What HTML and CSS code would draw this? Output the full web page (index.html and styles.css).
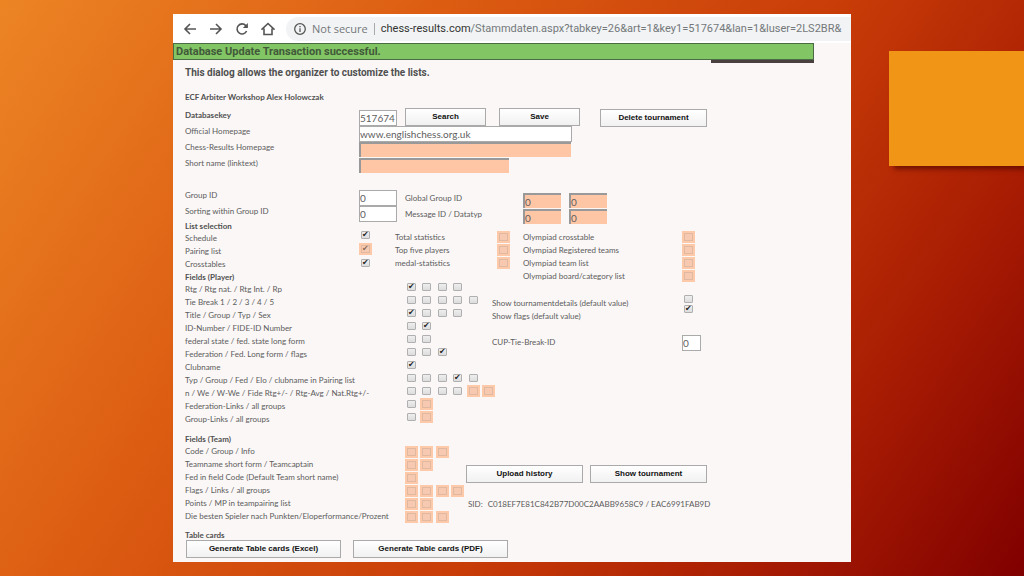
FILE: index.html
```html
<!DOCTYPE html>
<html lang="en">
<head>
<meta charset="utf-8">
<title>Tournament settings</title>
<link rel="stylesheet" href="styles.css">
</head>
<body>
<div class="slide">
<main class="window">
  <header class="toolbar">
    <button class="nav" aria-label="Back"><svg viewBox="0 0 14 14"><path d="M13 7H2M7 2L2 7l5 5"/></svg></button>
    <button class="nav" aria-label="Forward"><svg viewBox="0 0 14 14"><path d="M1 7h11M7 2l5 5-5 5"/></svg></button>
    <button class="nav" aria-label="Reload"><svg viewBox="0 0 14 14"><path d="M11.6 9A5 5 0 1 1 10.8 3.6L12 4.8"/><path class="solid" d="M12.9 1v5H7.9z"/></svg></button>
    <button class="nav" aria-label="Home"><svg viewBox="0 0 14 14"><path d="M.5 7.7L7 1.5l6.5 6.2M3 6.5v6h8v-6"/></svg></button>
    <div class="address">
      <svg class="info" viewBox="0 0 14 14"><circle cx="7" cy="7" r="5.3"/><path d="M7 6.3v3.6M7 3.9v1.3"/></svg>
      <span>Not secure</span><span class="divider"></span>
      <span class="url"><b>chess-results.com</b>/Stammdaten.aspx?tabkey=26&amp;art=1&amp;key1=517674&amp;lan=1&amp;luser=2LS2BR&amp;</span>
    </div>
  </header>
  <p class="alert">Database Update Transaction successful.</p>
  <form class="form">
    <h1>This dialog allows the organizer to customize the lists.</h1>
    <h2 class="event">ECF Arbiter Workshop Alex Holowczak</h2>

    <section class="basics">
      <div class="line first">
        <label class="name strong" for="key">Databasekey</label>
        <input class="text short" id="key" value="517674">
        <button type="button" class="btn search">Search</button>
        <button type="button" class="btn save">Save</button>
        <button type="button" class="btn delete">Delete tournament</button>
      </div>
      <div class="line"><label class="name" for="home">Official Homepage</label><input class="text long" id="home" value="www.englishchess.org.uk"></div>
      <div class="line"><label class="name" for="crhome">Chess-Results Homepage</label><input class="text long locked" id="crhome"></div>
      <div class="line"><label class="name" for="sname">Short name (linktext)</label><input class="text medium locked" id="sname"></div>
    </section>

    <section class="groups">
      <div class="stack names wide"><label for="gid">Group ID</label><label for="sort">Sorting within Group ID</label></div>
      <div class="stack"><input class="text short" id="gid" value="0"><input class="text short" id="sort" value="0"></div>
      <div class="stack names ids"><label for="ggid">Global Group ID</label><label for="msg">Message ID / Datatyp</label></div>
      <div class="pairs">
        <input class="text short locked" id="ggid" value="0"><input class="text short locked" aria-label="Global Group ID 2" value="0">
        <input class="text short locked" id="msg" value="0"><input class="text short locked" aria-label="Datatyp" value="0">
      </div>
    </section>

    <section class="lists">
      <div class="rows wide">
        <h2>List selection</h2>
        <label for="l1">Schedule</label><label for="l2">Pairing list</label><label for="l3">Crosstables</label>
        <h2 class="player">Fields (Player)</h2>
        <label for="p1">Rtg / Rtg nat. / Rtg Int. / Rp</label>
        <label for="p2">Tie Break 1 / 2 / 3 / 4 / 5</label>
        <label for="p3">Title / Group / Typ / Sex</label>
        <label for="p4">ID-Number / FIDE-ID Number</label>
        <label for="p5">federal state / fed. state long form</label>
        <label for="p6">Federation / Fed. Long form / flags</label>
        <label for="p7">Clubname</label>
        <label for="p8">Typ / Group / Fed / Elo / clubname in Pairing list</label>
        <label for="p9">n / We / W-We / Fide Rtg+/- / Rtg-Avg / Nat.Rtg+/-</label>
        <label for="p10">Federation-Links / all groups</label>
        <label for="p11">Group-Links / all groups</label>
      </div>
      <div class="options">
        <div class="selection">
          <div class="checks main"><input type="checkbox" id="l1" checked><input type="checkbox" id="l2" class="off" checked><input type="checkbox" id="l3" checked></div>
          <div class="rows stats"><label for="s1">Total statistics</label><label for="s2">Top five players</label><label for="s3">medal-statistics</label></div>
          <div class="checks mid"><input type="checkbox" id="s1" class="off"><input type="checkbox" id="s2" class="off"><input type="checkbox" id="s3" class="off"></div>
          <div class="rows olympiad"><label for="o1">Olympiad crosstable</label><label for="o2">Olympiad Registered teams</label><label for="o3">Olympiad team list</label><label for="o4">Olympiad board/category list</label></div>
          <div class="checks last"><input type="checkbox" id="o1" class="off"><input type="checkbox" id="o2" class="off"><input type="checkbox" id="o3" class="off"><input type="checkbox" id="o4" class="off"></div>
        </div>
        <div class="playerfields">
          <div class="matrix">
            <div><input type="checkbox" id="p1" aria-label="Rtg" checked><input type="checkbox" aria-label="Rtg nat."><input type="checkbox" aria-label="Rtg Int."><input type="checkbox" aria-label="Rp"></div>
            <div><input type="checkbox" id="p2" aria-label="Tie Break 1"><input type="checkbox" aria-label="Tie Break 2"><input type="checkbox" aria-label="Tie Break 3"><input type="checkbox" aria-label="Tie Break 4"><input type="checkbox" aria-label="Tie Break 5"></div>
            <div><input type="checkbox" id="p3" aria-label="Title" checked><input type="checkbox" aria-label="Group"><input type="checkbox" aria-label="Typ"><input type="checkbox" aria-label="Sex"></div>
            <div><input type="checkbox" id="p4" aria-label="ID-Number"><input type="checkbox" aria-label="FIDE-ID Number" checked></div>
            <div><input type="checkbox" id="p5" aria-label="federal state"><input type="checkbox" aria-label="fed. state long form"></div>
            <div><input type="checkbox" id="p6" aria-label="Federation"><input type="checkbox" aria-label="Fed. Long form"><input type="checkbox" aria-label="flags" checked></div>
            <div><input type="checkbox" id="p7" aria-label="Clubname" checked></div>
            <div><input type="checkbox" id="p8" aria-label="Typ"><input type="checkbox" aria-label="Group"><input type="checkbox" aria-label="Fed"><input type="checkbox" aria-label="Elo" checked><input type="checkbox" aria-label="clubname in Pairing list"></div>
            <div><input type="checkbox" id="p9" aria-label="n"><input type="checkbox" aria-label="We"><input type="checkbox" aria-label="W-We"><input type="checkbox" aria-label="Fide Rtg+/-"><input type="checkbox" class="off" aria-label="Rtg-Avg"><input type="checkbox" class="off" aria-label="Nat.Rtg+/-"></div>
            <div><input type="checkbox" id="p10" aria-label="Federation-Links"><input type="checkbox" class="off" aria-label="all groups"></div>
            <div><input type="checkbox" id="p11" aria-label="Group-Links"><input type="checkbox" class="off" aria-label="all groups"></div>
          </div>
          <div class="rows defaults">
            <label for="d1">Show tournamentdetails (default value)</label><label for="d2">Show flags (default value)</label>
            <label class="cup" for="cup">CUP-Tie-Break-ID</label>
          </div>
          <div class="values">
            <input type="checkbox" id="d1"><input type="checkbox" id="d2" checked>
            <input class="text tiny" id="cup" value="0">
          </div>
        </div>
      </div>
    </section>

    <section class="team">
      <div class="rows teamnames">
        <h2>Fields (Team)</h2>
        <label for="t1">Code / Group / Info</label>
        <label for="t2">Teamname short form / Teamcaptain</label>
        <label for="t3">Fed in field Code (Default Team short name)</label>
        <label for="t4">Flags / Links / all groups</label>
        <label for="t5">Points / MP in teampairing list</label>
        <label for="t6">Die besten Spieler nach Punkten/Eloperformance/Prozent</label>
      </div>
      <div class="matrix">
        <div><input type="checkbox" class="off" id="t1" aria-label="Code"><input type="checkbox" class="off" aria-label="Group"><input type="checkbox" class="off" aria-label="Info"></div>
        <div><input type="checkbox" class="off" id="t2" aria-label="Teamname short form"><input type="checkbox" class="off" aria-label="Teamcaptain"></div>
        <div><input type="checkbox" class="off" id="t3" aria-label="Fed in field Code"></div>
        <div><input type="checkbox" class="off" id="t4" aria-label="Flags"><input type="checkbox" class="off" aria-label="Links"><input type="checkbox" class="off" aria-label="Links 2"><input type="checkbox" class="off" aria-label="all groups"></div>
        <div><input type="checkbox" class="off" id="t5" aria-label="Points"><input type="checkbox" class="off" aria-label="MP"></div>
        <div><input type="checkbox" class="off" id="t6" aria-label="Punkten"><input type="checkbox" class="off" aria-label="Eloperformance"><input type="checkbox" class="off" aria-label="Prozent"></div>
      </div>
      <div class="actions">
        <div class="pair"><button type="button" class="btn">Upload history</button><button type="button" class="btn">Show tournament</button></div>
        <p class="sid"><span>SID:</span><span>C018EF7E81C842B77D00C2AABB9658C9 / EAC6991FAB9D</span></p>
      </div>
    </section>

    <section class="cards">
      <h2>Table cards</h2>
      <div class="cardbuttons"><button type="button" class="btn">Generate Table cards (Excel)</button><button type="button" class="btn">Generate Table cards (PDF)</button></div>
    </section>
  </form>
</main>
<aside class="side"><div class="block"></div></aside>
</div>
</body>
</html>
```
FILE: styles.css
```css
* { box-sizing: border-box; }
body {
  margin: 0;
  font-family: Lato, "Open Sans", sans-serif;
  font-size: 8px;
  line-height: 10px;
  color: #5c5c5c;
}
h1, h2, p { margin: 0; }
h2 { font-size: 8px; font-weight: 700; color: #505050; white-space: nowrap; }
label { white-space: nowrap; }
.slide {
  min-height: 100vh;
  padding: 14px 0;
  display: grid;
  grid-template-columns: 173fr 678fr 173fr;
  align-items: start;
  background: linear-gradient(124deg, #ec8424 0%, #dc5c12 32%, #c83c08 60%, #a91d03 80%, #800000 100%);
}
.window { grid-column: 2; background: #faf7f6; min-width: 0; }
.side { padding: 37px 0 0 38px; }
.block { height: 115px; background: #f09516; box-shadow: 3px 5px 5px -2px rgba(60, 0, 0, .6); }

/* browser toolbar */
.toolbar { display: flex; align-items: center; gap: 12px; height: 29px; padding-left: 10px; background: #fff; }
.nav { width: 14px; height: 14px; padding: 0; border: 0; background: none; flex: none; }
.toolbar svg { display: block; width: 14px; height: 14px; fill: none; stroke: #555; stroke-width: 1.6; flex: none; }
.toolbar .solid { fill: #555; stroke: none; }
.address {
  display: flex; align-items: center; flex: 1; min-width: 0; height: 24px;
  margin-left: -1px; padding-left: 7px;
  border-radius: 12px 0 0 12px; background: #f1f3f4;
  font: 11px/16px "Open Sans", sans-serif; color: #74787b; white-space: nowrap; overflow: hidden;
}
.address .info { margin-right: 5px; stroke-width: 1.3; }
.divider { width: 1px; height: 12px; margin: 0 6px; background: #aaa; flex: none; }
.url { font-family: Roboto, sans-serif; }
.url b { font-weight: 400; color: #333; }

.alert {
  position: relative; width: 641px; max-width: 100%; height: 17px; padding-left: 2px;
  border: 1px solid #4b6b45; background: #82c564;
  font: bold 11px/16px Roboto, sans-serif; color: #41593a;
}
.alert::after { content: ""; position: absolute; right: -1px; top: 16px; width: 103px; height: 3px; background: #4a4040; }

.form { padding: 6px 12px 4px; }
h1 { font: bold 10px/14px Roboto, sans-serif; color: #505050; }
.event { margin-top: 12px; }

/* fields */
.text {
  height: 16px; padding: 0; border: 1px solid #aaa; border-radius: 0; background: #fff;
  font: 10px/14px Lato, "Open Sans", sans-serif; color: #606060; flex: none;
}
.locked { height: 15px; border-width: 2px 0 0 2px; border-color: #999; background: #ffc6a5; }
.short { width: 38px; }
.medium { width: 150px; }
.long { width: 213px; }
.long.locked { width: 212px; }
.tiny { width: 19px; }
.btn {
  height: 18px; padding: 0; border: 1px solid #aaa; border-radius: 0;
  background: linear-gradient(#fff, #f1f1f1);
  font: bold 8px/16px "Liberation Sans", Arial, sans-serif; color: #111; flex: none;
}
.basics { margin-top: 6px; }
.line { display: flex; height: 16px; }
.first { height: 18px; }
.name, .wide { width: 174px; flex: none; }
.first .name { padding-top: 2px; }
.first .text { margin-top: 2px; }
.strong { font-weight: 700; color: #505050; }
.search { width: 81px; margin-left: 8px; }
.save { width: 81px; margin-left: 13px; }
.delete { width: 107px; margin: 1px 0 0 20px; }

.groups { display: flex; margin-top: 16px; }
.stack { display: flex; flex-direction: column; }
.names { gap: 6px; }
.ids { width: 118px; margin: 3px 0 0 8px; flex: none; }
.pairs { display: grid; grid-template-columns: 38px 38px; gap: 1px 8px; padding-top: 3px; }

/* tick boxes */
[type="checkbox"] {
  appearance: none; width: 9px; height: 8px; margin: 2px;
  border: 1px solid #b0b0b0; border-radius: 1px; background: linear-gradient(#eee, #ddd);
  color: #222; display: block; overflow: visible;
}
[type="checkbox"]:checked::before {
  content: "✔"; display: block; margin: -1px 0 0 0;
  font: 8px/8px "DejaVu Sans", sans-serif;
}
[type="checkbox"].off { border-color: #e0b9a2; border-radius: 0; background: #f6c9b0; box-shadow: 0 0 0 2px #fdc9a9; color: #8a6a58; }

.rows { display: flex; flex-direction: column; line-height: 13px; }
.rows h2 { line-height: 12px; }
.lists { display: flex; margin-top: -4px; }
.options { flex: 1; min-width: 0; }
.selection { display: flex; padding-top: 11px; margin-bottom: -3px; }
.checks { display: flex; flex-direction: column; gap: 1px; flex: none; }
.main { width: 36px; margin-top: -2px; gap: 2px; }
.stats { width: 102px; flex: none; }
.mid { width: 26px; }
.olympiad { width: 159px; flex: none; }
.playerfields { display: flex; padding-left: 46px; }
.matrix { width: 87px; flex: none; }
.matrix div { display: grid; grid-template-columns: 15px 16px 15px 16px 15px 16px; height: 13px; align-items: center; }
.defaults { width: 190px; padding-top: 17px; flex: none; }
.cup { padding-top: 13px; }
.values { padding-top: 13px; }
.values .text { margin-top: 20px; }

.team { display: flex; margin-top: 7px; }
.teamnames { width: 220px; flex: none; }
.team .matrix { width: 61px; padding-top: 12px; }
.actions { padding-top: 32px; }
.pair { display: flex; gap: 7px; }
.pair .btn { width: 117px; }
.sid { display: flex; gap: 5px; margin-top: 16px; padding-left: 2px; white-space: nowrap; }
.cards { padding-top: 7px; }
.cardbuttons { display: flex; gap: 12px; padding-left: 1px; }
.cardbuttons .btn { width: 155px; }
```
